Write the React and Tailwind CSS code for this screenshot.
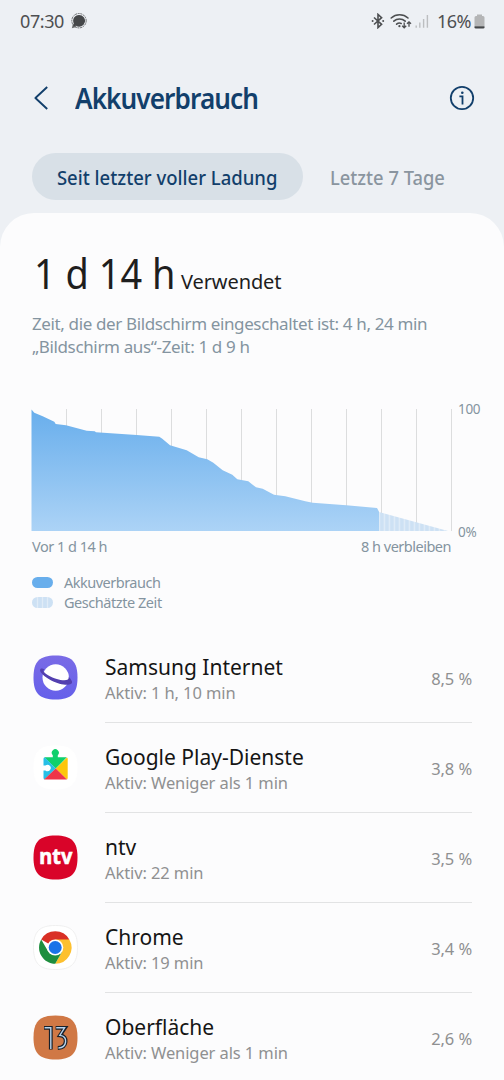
import React from 'react';

const SQUIRCLE = 'M22.5 0.5C38.5 0.5 44.5 6.5 44.5 22.5C44.5 38.5 38.5 44.5 22.5 44.5C6.5 44.5 0.5 38.5 0.5 22.5C0.5 6.5 6.5 0.5 22.5 0.5Z';

const USAGE_PATH =
  'M31.5 531V409.5L34.3 412.7L42.7 416.3L54.3 421.7L55.7 424L66 425.3L86.7 430.7L94.7 431.3L96 432.3L136.7 435L159.3 436.7L162.3 438.7L170 445.3L186.7 450.3L198.7 457.3L207.3 459.3L213.3 462.7L222.7 470.3L232.3 474.7L237.3 479.3L248.3 481.3L252 484.3L256 487.3L262.7 488.7L274 494.7L285.3 496.3L305.3 501.3L312.7 502.7L346.3 505.3L377 508L379 511.7V531Z';

const InternetIcon = () => (
  <svg className="h-[45px] w-[45px]" viewBox="0 0 45 45">
    <defs>
      <linearGradient id="internet" x1="0" y1="0" x2="0" y2="1">
        <stop offset="0" stopColor="#7a6be6" />
        <stop offset="1" stopColor="#6560ea" />
      </linearGradient>
    </defs>
    <path d={SQUIRCLE} fill="url(#internet)" />
    <circle cx="22.7" cy="22.5" r="13.2" fill="#fff" />
    <path
      d="M11.5 14.2C7.5 12.2 5.9 14.6 8 17.6C11.5 22.2 19 26.8 26.5 28.8C34.5 30.8 39.8 29.8 39 26.6C38.6 25 37.3 23.4 35.7 22C36.4 24.6 33.4 26 27.5 24.9C20.5 23.4 12 19.2 10.6 16.4C10.3 15.6 10.7 14.8 11.5 14.2Z"
      fill="#5340b0"
    />
  </svg>
);

const PlayServicesIcon = () => (
  <svg className="h-[45px] w-[45px]" viewBox="0 0 45 45">
    <path d={SQUIRCLE} fill="#fff" />
    <clipPath id="puzzle">
      <path d="M12 12.3H19.8V10.2A3.5 3.5 0 1 1 24.8 10.2V12.3H33.2Q34.7 12.3 34.7 13.8V33Q34.7 34.5 33.2 34.5H12Q10.5 34.5 10.5 33V25.4H12.4A3.2 3.2 0 1 0 12.4 20.6H10.5V13.8Q10.5 12.3 12 12.3Z" />
    </clipPath>
    <g clipPath="url(#puzzle)">
      <path d="M7 3H38V8L22.8 23.6L10.5 11.5Z" fill="#0fd06c" />
      <path d="M10.5 11L22.8 23.6L10.5 35.5H8V11Z" fill="#27bfe6" />
      <path d="M35 11.5L22.8 23.6L35 35.5Z" fill="#fdc60b" />
      <path d="M10 35.5L22.8 23.6L35 35.5Z" fill="#ee3548" />
    </g>
  </svg>
);

const NtvIcon = () => (
  <svg className="h-[45px] w-[45px]" viewBox="0 0 45 45">
    <path d={SQUIRCLE} fill="#d90429" />
    <text
      x="22.8"
      y="29.2"
      textAnchor="middle"
      textLength="33"
      lengthAdjust="spacingAndGlyphs"
      fill="#fff"
      stroke="#fff"
      strokeWidth="0.6"
      className="font-['Noto_Sans',sans-serif] text-[21px] font-bold"
    >
      ntv
    </text>
  </svg>
);

const ChromeIcon = () => (
  <svg className="h-[45px] w-[45px]" viewBox="0 0 45 45">
    <path d={SQUIRCLE} fill="#fff" stroke="#ececec" strokeWidth="0.8" />
    <path d="M22.2 22.5L8.2 14.4A16.2 16.2 0 0 1 36.3 14.4Z" fill="#d93025" />
    <path d="M22.2 14.4H36.3A16.2 16.2 0 0 1 22.2 38.7L29.2 26.5Z" fill="#fdc02f" />
    <path d="M15.2 26.5L8.2 14.4A16.2 16.2 0 0 0 22.2 38.7L29.2 26.5Z" fill="#1e8e3e" />
    <circle cx="22.2" cy="22.5" r="8.1" fill="#fff" />
    <circle cx="22.2" cy="22.5" r="6.5" fill="#1a73e8" />
  </svg>
);

const OneUiIcon = () => (
  <svg className="h-[45px] w-[45px]" viewBox="0 0 45 45">
    <path d={SQUIRCLE} fill="#d07845" />
    <g fill="none" strokeLinejoin="miter">
      <g stroke="#17212c" strokeWidth="3.8">
        <path d="M11 12.8H17.8V34.6" />
        <path d="M22.6 12.8H32L27 20.4C31.4 20.8 33 23.3 32.6 26.8C32.2 30.5 29.4 32.8 24.8 33" />
      </g>
      <g stroke="#b9d4ec" strokeWidth="1.4">
        <path d="M11.6 12.8H17.8V34" />
        <path d="M23.2 12.8H31.6L26.8 20.4C31.4 20.8 33 23.3 32.6 26.8C32.2 30.5 29.4 32.8 25.4 33" />
      </g>
    </g>
  </svg>
);

const apps = [
  { name: 'Samsung Internet', active: 'Aktiv: 1 h, 10 min', percent: '8,5 %', icon: InternetIcon },
  { name: 'Google Play-Dienste', active: 'Aktiv: Weniger als 1 min', percent: '3,8 %', icon: PlayServicesIcon },
  { name: 'ntv', active: 'Aktiv: 22 min', percent: '3,5 %', icon: NtvIcon },
  { name: 'Chrome', active: 'Aktiv: 19 min', percent: '3,4 %', icon: ChromeIcon },
  { name: 'Oberfläche', active: 'Aktiv: Weniger als 1 min', percent: '2,6 %', icon: OneUiIcon },
];

const StatusBar = () => (
  <div className="flex h-[42px] shrink-0 items-center justify-between pl-5 pr-[19px] text-[#4d4f51]">
    <div className="flex items-center gap-[7px]">
      <span className="text-[18px] leading-none tracking-[-0.4px]">07:30</span>
      <svg className="h-4 w-4" viewBox="0 0 16 16">
        <circle cx="8" cy="7.7" r="7.2" fill="none" stroke="#6b6d6f" strokeWidth="1" strokeDasharray="2 0.7" />
        <path d="M0.8 15.2L2 10.6L5.6 14Z" fill="#6b6d6f" />
        <path d="M8 1.9A5.9 5.9 0 1 1 5 12.8L2.2 13.6L2.9 10.7A5.9 5.9 0 0 1 8 1.9Z" fill="#454749" />
      </svg>
    </div>
    <div className="flex items-center">
      <svg className="h-4 w-[14px]" viewBox="0 0 14 16">
        <path d="M3 4.5L10.6 11.3L7 14.6V1.4L10.6 4.7L3 11.5" fill="none" stroke="#4d4f51" strokeWidth="1.6" />
        <circle cx="1.6" cy="8" r="1" fill="#4d4f51" />
        <circle cx="12.2" cy="8" r="1" fill="#4d4f51" />
      </svg>
      <svg className="ml-[5px] h-4 w-[22px]" viewBox="0 0 22 16">
        <g fill="none" stroke="#4d4f51" strokeWidth="1.6" strokeLinecap="round">
          <path d="M1.2 5A12.4 12.4 0 0 1 18 5" />
          <path d="M3.8 8.2A8.4 8.4 0 0 1 15.2 8.2" />
          <path d="M6.6 11.2A4.6 4.6 0 0 1 11.2 10.4" />
        </g>
        <circle cx="9.4" cy="13.2" r="1.1" fill="#4d4f51" />
        <g fill="none" stroke="#4d4f51" strokeWidth="1.3">
          <path d="M14.2 9.5V14.6M12.2 12.8L14.2 14.8L16.2 12.8" />
          <path d="M19 13.8V9M17 10.8L19 8.8L21 10.8" />
        </g>
      </svg>
      <svg className="ml-[3px] h-4 w-[14px]" viewBox="0 0 14 16">
        <path d="M1.2 12.5V14.8M4.8 9.5V14.8M8.6 6V14.8M12.4 2V14.8" stroke="#bcbec0" strokeWidth="1.4" />
      </svg>
      <span className="ml-[8px] text-[18px] leading-none tracking-[-0.5px]">16%</span>
      <svg className="ml-[3px] h-[15px] w-[11px]" viewBox="0 0 11 15">
        <path d="M3 0.5H8V2H9Q10.5 2 10.5 3.5V12H0.5V3.5Q0.5 2 2 2H3Z" fill="#b4b5b6" />
        <path d="M0.5 12.2H10.5V13.2Q10.5 14.5 9.2 14.5H1.8Q0.5 14.5 0.5 13.2Z" fill="#454749" />
      </svg>
    </div>
  </div>
);

const Header = () => (
  <div className="flex h-[111px] shrink-0 items-center pl-[33px] pr-[29px] text-[#123f6b]">
    <svg className="h-[26px] w-4" viewBox="0 0 16 26" fill="none" stroke="currentColor" strokeWidth="1.9">
      <path d="M14.2 2L2.4 13L14.2 24" strokeLinejoin="round" />
    </svg>
    <h1 className="ml-[26px] origin-left scale-x-[0.935] whitespace-nowrap text-[28px] font-semibold leading-none tracking-[-1px]">
      Akkuverbrauch
    </h1>
    <svg className="ml-auto h-[26px] w-[26px]" viewBox="0 0 26 26" fill="none" stroke="currentColor" strokeWidth="1.8">
      <circle cx="13" cy="13" r="11.2" />
      <path d="M10.4 11.3H13.5V19.6" />
      <circle cx="13.3" cy="7.7" r="1.3" fill="currentColor" stroke="none" />
    </svg>
  </div>
);

const Tabs = () => (
  <div className="flex h-[47px] shrink-0 items-center whitespace-nowrap pl-8 text-[20px] font-medium leading-none">
    <button className="flex h-[47px] w-[271px] items-center justify-center rounded-full bg-[#d8e0e7] text-[#123f6b]">
      <span className="scale-x-[0.925] pt-[2px]">Seit letzter voller Ladung</span>
    </button>
    <button className="ml-[27px] origin-left scale-x-[0.917] pt-[2px] text-[#8a959f]">Letzte 7 Tage</button>
  </div>
);

const BatteryChart = () => (
  <div className="ml-[31px] mt-[51px] text-[14.5px] leading-none text-[#8494a0]">
    <div className="flex">
      <svg className="h-[123px] w-[422px]" viewBox="31 409 422 123">
        <defs>
          <linearGradient id="usage" x1="0" y1="0" x2="0" y2="1">
            <stop offset="0" stopColor="#68aeec" />
            <stop offset="1" stopColor="#acd3f6" />
          </linearGradient>
          <pattern id="stripes" x="380.2" y="0" width="5" height="10" patternUnits="userSpaceOnUse">
            <rect width="5" height="10" fill="#e0ecf7" />
            <rect width="3.6" height="10" fill="#cde1f4" />
          </pattern>
        </defs>
        {Array.from({ length: 12 }, (_, i) => (
          <rect key={i} x={66 + i * 35} y="409" width="1" height="122" fill="#dcddde" />
        ))}
        <path d={USAGE_PATH} fill="url(#usage)" />
        <path d="M379 512L448 531H379Z" fill="url(#stripes)" />
      </svg>
      <div className="-mt-[6px] ml-[5px] flex h-[136px] flex-col justify-between text-[13.5px] tracking-[-0.3px]">
        <span>100</span>
        <span>0%</span>
      </div>
    </div>
    <div className="flex w-[420px] justify-between pl-px">
      <span className="tracking-[-0.5px]">Vor 1 d 14 h</span>
      <span className="tracking-[-0.5px]">8 h verbleiben</span>
    </div>
    <div className="mt-[19px] flex flex-col pl-px">
      <div className="flex h-5 items-center">
        <span className="h-[11px] w-[21px] rounded-full bg-[#68aeec]" />
        <span className="ml-[11px] tracking-[-0.5px]">Akkuverbrauch</span>
      </div>
      <div className="flex h-5 items-center">
        <svg className="h-[11px] w-[21px]" viewBox="0 0 21 11">
          <rect width="21" height="11" rx="5.5" fill="#cde1f4" />
          <path d="M5.5 0V11M10.5 0V11M15.5 0V11" stroke="#e0ecf7" strokeWidth="1.3" />
        </svg>
        <span className="ml-[11px] tracking-[-0.45px]">Geschätzte Zeit</span>
      </div>
    </div>
  </div>
);

const AppRow = ({ app, last }) => {
  const Icon = app.icon;
  return (
    <div className="flex h-[90px] shrink-0 pl-[33px] pr-8">
      <div className="flex h-full items-center">
        <Icon />
      </div>
      <div className={`ml-[27px] flex flex-1 items-center justify-between border-b pt-[5px] ${last ? 'border-transparent' : 'border-[#e2e3e4]'}`}>
        <div className="whitespace-nowrap">
          <p className="text-[21px] leading-[26px] text-[#151515]">{app.name}</p>
          <p className="text-[16.5px] leading-[25px] tracking-[-0.1px] text-[#8f9091]">{app.active}</p>
        </div>
        <span className="pb-px text-[16.5px] tracking-[-0.1px] text-[#8f9091]">{app.percent}</span>
      </div>
    </div>
  );
};

const App = () => {
  return (
    <div className="flex h-[1080px] w-[504px] flex-col overflow-hidden bg-[#edf0f4] font-['Noto_Sans',sans-serif]">
      <StatusBar />
      <Header />
      <Tabs />
      <div className="mt-[13px] flex shrink-0 flex-col rounded-t-[34px] bg-[#fcfcfd]">
        <div className="whitespace-nowrap pl-8 pt-8">
          <div className="flex items-baseline leading-[56px] text-[#1e1e1e]">
            <span className="ml-[2px] w-[147px] origin-left scale-x-[0.925] text-[41px]">1 d 14 h</span>
            <span className="text-[20px] tracking-[-0.1px]">Verwendet</span>
          </div>
          <p className="mt-[2px] text-[17px] leading-[23px] tracking-[-0.37px] text-[#8494a0]">
            Zeit, die der Bildschirm eingeschaltet ist: 4 h, 24 min
          </p>
          <p className="text-[17px] leading-[23px] tracking-[-0.35px] text-[#8494a0]">„Bildschirm aus“-Zeit: 1 d 9 h</p>
        </div>
        <BatteryChart />
        <div className="mt-5">
          {apps.map((app, index) => (
            <AppRow key={app.name} app={app} last={index === apps.length - 1} />
          ))}
        </div>
      </div>
    </div>
  );
};

export default App;
